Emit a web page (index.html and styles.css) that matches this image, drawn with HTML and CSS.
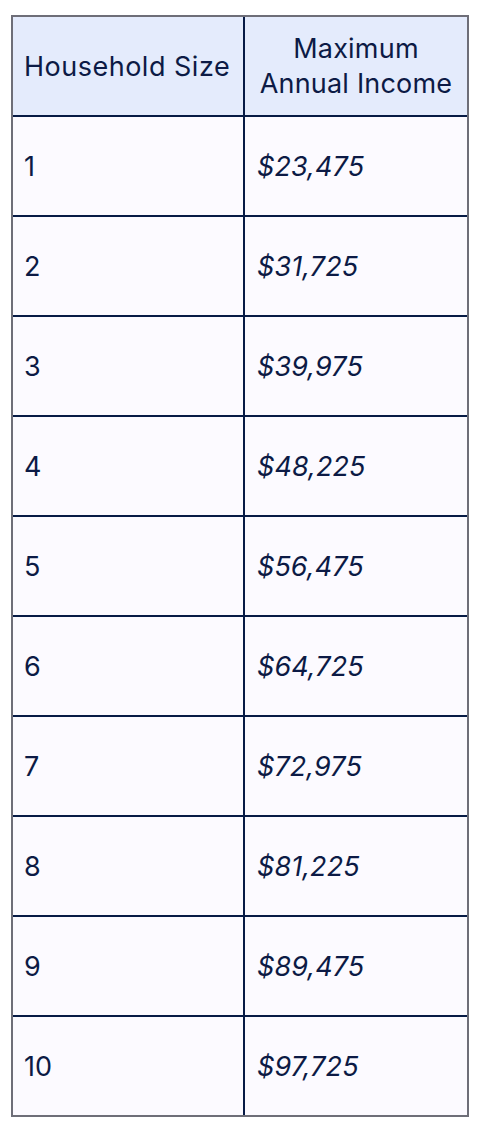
FILE: index.html
```html
<!DOCTYPE html>
<html lang="en">
<head>
<meta charset="utf-8">
<title>Income Limits</title>
<link rel="stylesheet" href="styles.css">
</head>
<body>
<div class="table">
  <div class="cell head">Household Size</div>
  <div class="cell head center">Maximum<br>Annual Income</div>
  <div class="cell">1</div><div class="cell val">$23,475</div>
  <div class="cell">2</div><div class="cell val">$31,725</div>
  <div class="cell">3</div><div class="cell val">$39,975</div>
  <div class="cell">4</div><div class="cell val">$48,225</div>
  <div class="cell">5</div><div class="cell val">$56,475</div>
  <div class="cell">6</div><div class="cell val">$64,725</div>
  <div class="cell">7</div><div class="cell val">$72,975</div>
  <div class="cell">8</div><div class="cell val">$81,225</div>
  <div class="cell">9</div><div class="cell val">$89,475</div>
  <div class="cell">10</div><div class="cell val">$97,725</div>
</div>
</body>
</html>
```
FILE: styles.css
```css
* { box-sizing: border-box; }
html, body { background: #ffffff; }
body {
  margin: 0;
  padding: 15px 0 0 11px;
  font-family: Inter, "Noto Sans", sans-serif;
  color: #0c1a45;
}
.table {
  width: 458px;
  display: grid;
  grid-template-columns: 230px 222px;
  grid-auto-rows: 98px;
  gap: 2px;
  background: #071a45;
  border: 2px solid #6e6e78;
}
.cell {
  background: #fcfaff;
  display: flex;
  align-items: center;
  padding: 0 11px;
  font-size: 27px;
  line-height: 35px;
  letter-spacing: 0.1px;
}
.head {
  background: #e4ebfc;
  letter-spacing: 0.5px;
  white-space: nowrap;
}
.center {
  justify-content: center;
  text-align: center;
  padding: 0 2px;
  letter-spacing: 0.2px;
}
.val {
  font-style: italic;
  padding-left: 12px;
}
```
